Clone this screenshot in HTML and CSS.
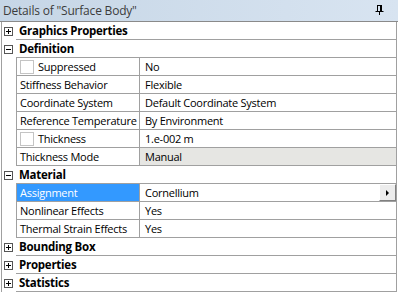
FILE: index.html
```html
<!DOCTYPE html>
<html lang="en">

<head>
    <meta charset="UTF-8">
    <title>Details of "Surface Body"</title>
    <link rel="stylesheet" href="styles.css">
</head>

<body>
    <div class="panel">
        <div class="titlebar">
            <span class="title">Details of "Surface Body"</span>
            <svg class="pin" width="9" height="10" viewBox="0 0 9 10">
                <path d="M2 0.5H7M2.5 0.5V6M6.5 0.5V6M5.5 0.5V6M0.5 6.5H8.5M4.5 6.5V10" stroke="#000" stroke-width="1" fill="none"/>
            </svg>
        </div>

        <div class="grid">
            <div class="row group">
                <div class="gutter"><svg class="toggle" width="9" height="9"><rect x="0.5" y="0.5" width="8" height="8" fill="#fff" stroke="#555"/><path d="M2 4.5H7M4.5 2V7" stroke="#000"/></svg></div>
                <div class="head">Graphics Properties</div>
            </div>

            <div class="row group">
                <div class="gutter"><svg class="toggle" width="9" height="9"><rect x="0.5" y="0.5" width="8" height="8" fill="#fff" stroke="#555"/><path d="M2 4.5H7" stroke="#000"/></svg></div>
                <div class="head">Definition</div>
            </div>
            <div class="row">
                <div class="gutter"></div>
                <div class="label"><span class="check"></span>Suppressed</div>
                <div class="value">No</div>
            </div>
            <div class="row">
                <div class="gutter"></div>
                <div class="label">Stiffness Behavior</div>
                <div class="value">Flexible</div>
            </div>
            <div class="row">
                <div class="gutter"></div>
                <div class="label">Coordinate System</div>
                <div class="value">Default Coordinate System</div>
            </div>
            <div class="row">
                <div class="gutter"></div>
                <div class="label">Reference Temperature</div>
                <div class="value">By Environment</div>
            </div>
            <div class="row">
                <div class="gutter"></div>
                <div class="label"><span class="check"></span>Thickness</div>
                <div class="value">1.e-002 m</div>
            </div>
            <div class="row">
                <div class="gutter"></div>
                <div class="label">Thickness Mode</div>
                <div class="value readonly">Manual</div>
            </div>

            <div class="row group">
                <div class="gutter"><svg class="toggle" width="9" height="9"><rect x="0.5" y="0.5" width="8" height="8" fill="#fff" stroke="#555"/><path d="M2 4.5H7" stroke="#000"/></svg></div>
                <div class="head">Material</div>
            </div>
            <div class="row">
                <div class="gutter"></div>
                <div class="label selected">Assignment</div>
                <div class="value">
                    Cornellium
                    <span class="drop"><span class="arrow"></span></span>
                </div>
            </div>
            <div class="row">
                <div class="gutter"></div>
                <div class="label">Nonlinear Effects</div>
                <div class="value">Yes</div>
            </div>
            <div class="row">
                <div class="gutter"></div>
                <div class="label">Thermal Strain Effects</div>
                <div class="value">Yes</div>
            </div>

            <div class="row group">
                <div class="gutter"><svg class="toggle" width="9" height="9"><rect x="0.5" y="0.5" width="8" height="8" fill="#fff" stroke="#555"/><path d="M2 4.5H7M4.5 2V7" stroke="#000"/></svg></div>
                <div class="head">Bounding Box</div>
            </div>
            <div class="row group">
                <div class="gutter"><svg class="toggle" width="9" height="9"><rect x="0.5" y="0.5" width="8" height="8" fill="#fff" stroke="#555"/><path d="M2 4.5H7M4.5 2V7" stroke="#000"/></svg></div>
                <div class="head">Properties</div>
            </div>
            <div class="row group">
                <div class="gutter"><svg class="toggle" width="9" height="9"><rect x="0.5" y="0.5" width="8" height="8" fill="#fff" stroke="#555"/><path d="M2 4.5H7M4.5 2V7" stroke="#000"/></svg></div>
                <div class="head">Statistics</div>
            </div>
        </div>
    </div>
</body>

</html>
```

FILE: styles.css
```css
body {
    margin: 0;
    background: #fff;
    font-family: "Open Sans", "DejaVu Sans", sans-serif;
    font-size: 11px;
    letter-spacing: -0.25px;
    color: #000;
}

.panel {
    width: 398px;
}

.titlebar {
    height: 21px;
    display: flex;
    align-items: center;
    justify-content: space-between;
    padding: 0 14px 0 3px;
    background: linear-gradient(to right, #c6d6e6, #d8e4f1);
    border-bottom: 1px solid #8a8a8a;
}

.title {
    font-size: 12px;
    letter-spacing: -0.2px;
    color: #3c3c3c;
}

.pin {
    display: block;
    margin-top: -2px;
}

.grid {
    margin-left: 1px;
    width: 394px;
    border-left: 1px solid #a0a0a0;
    border-right: 1px solid #a0a0a0;
}

.row {
    display: flex;
    height: 18px;
}

.gutter {
    width: 14px;
    flex: none;
    display: flex;
    align-items: center;
    padding-left: 2px;
    box-sizing: border-box;
}

.toggle {
    display: block;
}

.head,
.label,
.value {
    display: flex;
    align-items: center;
    border-bottom: 1px solid #a0a0a0;
    white-space: nowrap;
}

.head {
    flex: 1;
    padding-left: 3px;
    font-weight: bold;
    font-size: 11.5px;
}

.label {
    width: 119px;
    flex: none;
    padding-left: 3px;
    border-left: 1px solid #a0a0a0;
    border-right: 1px solid #a0a0a0;
}

.label.selected {
    background: #3399ff;
    color: #fff;
}

.value {
    flex: 1;
    position: relative;
    padding-left: 5px;
}

.value.readonly {
    background: #e6e6e3;
}

.check {
    width: 12px;
    height: 12px;
    border: 1px solid #c4c4c4;
    margin: 0 4px 0 0;
    flex: none;
}

/* dropdown button in the value cell */
.drop {
    position: absolute;
    right: 0;
    top: 0;
    width: 15px;
    height: 15px;
    background: #ececec;
    border: 1px solid #fff;
    border-right-color: #808080;
    border-bottom-color: #808080;
    display: flex;
    align-items: center;
    justify-content: center;
}

.arrow {
    width: 0;
    height: 0;
    border-top: 3px solid transparent;
    border-bottom: 3px solid transparent;
    border-left: 3px solid #000;
}
```
